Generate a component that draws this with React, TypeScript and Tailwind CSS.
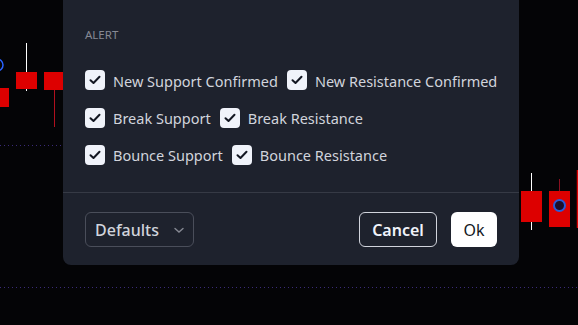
import {useState} from "react";

const rows = [
    ["New Support Confirmed", "New Resistance Confirmed"],
    ["Break Support", "Break Resistance"],
    ["Bounce Support", "Bounce Resistance"],
]

const ChartBackdrop = () => (
    <svg className="absolute inset-0" width="578" height="325" viewBox="0 0 578 325">
        {/* left candles */}
        <circle cx="-3" cy="65" r="6" fill="none" stroke="#2962ff" strokeWidth="1.5"/>
        <rect x="0" y="88" width="9" height="19" fill="#dd0000"/>
        <line x1="26.5" y1="43" x2="26.5" y2="91" stroke="#ffffff" strokeWidth="1"/>
        <rect x="16" y="72" width="21" height="17" fill="#dd0000"/>
        <line x1="54.5" y1="88" x2="54.5" y2="127" stroke="#b0101e" strokeWidth="1"/>
        <rect x="44" y="72" width="22" height="18" fill="#dd0000"/>
        <line x1="0" y1="145.5" x2="70" y2="145.5" stroke="#3a2a78" strokeWidth="1" strokeDasharray="1 3"/>
        {/* right candles */}
        <line x1="531.5" y1="173" x2="531.5" y2="230" stroke="#ffffff" strokeWidth="1"/>
        <rect x="521" y="191" width="21" height="31" fill="#dd0000"/>
        <line x1="559.5" y1="179" x2="559.5" y2="191" stroke="#8a1020" strokeWidth="1"/>
        <rect x="549" y="191" width="21" height="36" fill="#dd0000"/>
        <circle cx="559.5" cy="205.5" r="5.5" fill="#1b0d2a" stroke="#2a5bd7" strokeWidth="2"/>
        <line x1="577.5" y1="170" x2="577.5" y2="228" stroke="#dd0000" strokeWidth="1.5"/>
        <line x1="0" y1="287.5" x2="578" y2="287.5" stroke="#3a2a78" strokeWidth="1" strokeDasharray="1 3"/>
    </svg>
)

const CheckItem = ({label, checked, onToggle}: {label: string, checked: boolean, onToggle: () => void}) => (
    <label className="flex items-center gap-[8px] cursor-pointer whitespace-nowrap shrink-0" onClick={onToggle}>
        <span className="w-[20px] h-[20px] rounded-[4px] bg-[#f0f3fa] flex items-center justify-center shrink-0">
            {checked && (
                <svg width="12" height="10" viewBox="0 0 12 10">
                    <path d="M1.5 5.2 L4.5 8 L10.5 1.8" fill="none" stroke="#131722" strokeWidth="2" strokeLinecap="round" strokeLinejoin="round"/>
                </svg>
            )}
        </span>
        <span className="text-[14.5px] text-[#d1d4dc] leading-[20px] pt-[1px]">{label}</span>
    </label>
)

const App = () => {
    const [checked, setChecked] = useState<Record<string, boolean>>(
        Object.fromEntries(rows.flat().map(l => [l, true]))
    )

    return (
        <div className="relative w-[578px] h-[325px] bg-[#040406] overflow-hidden"
             style={{fontFamily: '"Noto Sans", "Open Sans", sans-serif'}}>
            <ChartBackdrop/>
            <div className="absolute left-[63px] top-0 w-[456px] h-[265px] bg-[#1e222d] rounded-b-[8px] flex flex-col">
                <div className="px-[22px] pt-[27px]">
                    <div className="text-[11.5px] leading-[16px] text-[#868993]">ALERT</div>
                    <div className="mt-[18px] flex flex-col">
                        {rows.map((row, i) => (
                            <div key={i} className={`flex items-center gap-[9px] ${i === 0 ? "h-[38px]" : "h-[37px]"}`}>
                                {row.map(label => (
                                    <CheckItem
                                        key={label}
                                        label={label}
                                        checked={checked[label]}
                                        onToggle={() => setChecked({...checked, [label]: !checked[label]})}
                                    />
                                ))}
                            </div>
                        ))}
                    </div>
                </div>
                <div className="mt-[19px] h-px bg-[#363a45]"/>
                <div className="px-[22px] pt-[19px] flex items-center justify-between">
                    <button className="h-[35px] w-[109px] pl-[9px] pr-[8px] flex items-center justify-between rounded-[6px] border border-[#4a4e5a] text-[16px] font-medium text-[#d1d4dc]">
                        <span>Defaults</span>
                        <svg width="12" height="8" viewBox="0 0 12 8">
                            <path d="M2 2.5 L6 6 L10 2.5" fill="none" stroke="#868993" strokeWidth="1.4" strokeLinecap="round"/>
                        </svg>
                    </button>
                    <div className="flex items-center gap-[14px]">
                        <button className="h-[35px] w-[78px] rounded-[6px] border border-[#d1d4dc] text-[16px] font-semibold text-[#f0f3fa]">
                            Cancel
                        </button>
                        <button className="h-[35px] w-[46px] rounded-[6px] bg-white text-[16px] text-[#131722]">
                            Ok
                        </button>
                    </div>
                </div>
            </div>
        </div>
    );
};

export default App;
